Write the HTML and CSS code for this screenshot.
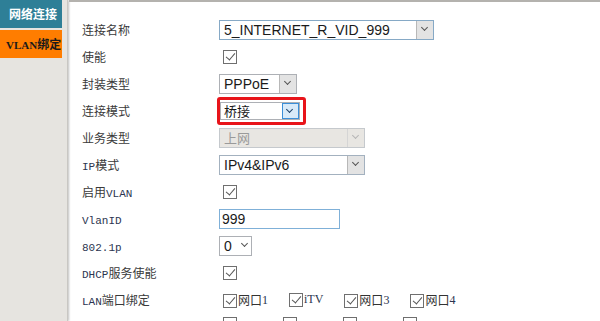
FILE: index.html
```html
<!DOCTYPE html>
<html lang="zh-CN">

<head>
    <meta charset="UTF-8">
    <title>VLAN绑定</title>
    <link rel="stylesheet" href="styles.css">
</head>

<body>
    <div id="page">
        <div id="sidebar">
            <div class="menu-item menu-top">网络连接</div>
            <div class="menu-item menu-active"><span class="mono">VLAN</span>绑定</div>
        </div>

        <div id="content">
            <div class="row">
                <div class="label">连接名称</div>
                <div class="select sel-name"><span>5_INTERNET_R_VID_999</span><i class="arrow"></i></div>
            </div>
            <div class="row">
                <div class="label">使能</div>
                <div class="check on"></div>
            </div>
            <div class="row">
                <div class="label">封装类型</div>
                <div class="select sel-pppoe"><span>PPPoE</span><i class="arrow"></i></div>
            </div>
            <div class="row">
                <div class="label">连接模式</div>
                <div class="highlight">
                    <div class="select sel-mode"><span class="cjk">桥接</span><i class="arrow focus"></i></div>
                </div>
            </div>
            <div class="row">
                <div class="label">业务类型</div>
                <div class="select sel-wide disabled"><span class="cjk">上网</span><i class="arrow"></i></div>
            </div>
            <div class="row">
                <div class="label"><span class="mono">IP</span>模式</div>
                <div class="select sel-wide"><span>IPv4&amp;IPv6</span><i class="arrow"></i></div>
            </div>
            <div class="row">
                <div class="label">启用<span class="mono">VLAN</span></div>
                <div class="check on"></div>
            </div>
            <div class="row">
                <div class="label"><span class="mono">VlanID</span></div>
                <div class="textbox">999</div>
            </div>
            <div class="row">
                <div class="label"><span class="mono">802.1p</span></div>
                <div class="select sel-small"><span>0</span><i class="chev"></i></div>
            </div>
            <div class="row">
                <div class="label"><span class="mono">DHCP</span>服务使能</div>
                <div class="check on"></div>
            </div>
            <div class="row">
                <div class="label"><span class="mono">LAN</span>端口绑定</div>
                <div class="ports">
                    <div class="port"><div class="check on"></div>网口<span class="mono">1</span></div>
                    <div class="port"><div class="check on"></div><span class="mono">iTV</span></div>
                    <div class="port"><div class="check on"></div>网口<span class="mono">3</span></div>
                    <div class="port"><div class="check on"></div>网口<span class="mono">4</span></div>
                </div>
            </div>
            <div class="row row-last">
                <div class="label"></div>
                <div class="ports ports-wifi">
                    <div class="port"><div class="check"></div></div>
                    <div class="port"><div class="check"></div></div>
                    <div class="port"><div class="check"></div></div>
                    <div class="port"><div class="check"></div></div>
                </div>
            </div>
        </div>
    </div>
</body>

</html>
```

FILE: styles.css
```css
* {
    padding: 0;
    margin: 0;
    box-sizing: border-box;
}

body {
    background-color: #ffffff;
    font-family: 'Noto Sans CJK SC', sans-serif;
    font-size: 12px;
    color: #333333;
    overflow: hidden;
}

#page {
    display: flex;
    height: 321px;
    overflow: hidden;
}

#sidebar {
    width: 68px;
    flex-shrink: 0;
    background-color: #e6e4e0;
    border-right: 1px solid #c9c7c3;
    box-shadow: 1px 0 2px rgba(0, 0, 0, 0.25);
    display: flex;
    flex-direction: column;
    gap: 2px;
}

.menu-item {
    width: 62px;
    height: 28px;
    line-height: 28px;
    font-weight: bold;
    font-size: 12px;
    padding-left: 7px;
    white-space: nowrap;
    overflow: hidden;
}

.menu-top {
    background-color: #2e7f97;
    color: #ffffff;
    padding-left: 9px;
}

.menu-active {
    background-color: #ff7d00;
    color: #1a1a1a;
    padding-left: 6px;
}

.menu-active .mono {
    font-family: 'Liberation Serif', serif;
    font-size: 11px;
    font-weight: bold;
}

#content {
    flex: 1;
    border-top: 2px solid #b4b2ae;
    margin-left: 1px;
    padding: 14px 0 0 13px;
}

.row {
    display: flex;
    align-items: center;
    height: 27px;
}

.label {
    width: 137px;
    flex-shrink: 0;
    color: #3a3a3a;
    white-space: nowrap;
}

.mono {
    font-family: 'Liberation Mono', monospace;
    font-size: 11px;
}

.label .mono {
    color: #2b3550;
}

.select {
    display: flex;
    align-items: center;
    justify-content: space-between;
    height: 20px;
    border: 1px solid #a9b8c6;
    background-color: #ffffff;
    font-family: 'Liberation Sans', sans-serif;
    font-size: 14px;
    color: #1a1a1a;
    padding-left: 4px;
}

.select .cjk {
    font-family: 'Noto Sans CJK SC', sans-serif;
    font-size: 13px;
}

.sel-name {
    width: 215px;
    border-color: #86a9c6;
}

.sel-pppoe {
    width: 78px;
    border-color: #adb0b5;
}

.sel-mode {
    width: 80px;
    height: 18px;
    border-color: #adb0b5;
    padding-left: 3px;
}

.sel-wide {
    width: 146px;
    border-color: #a3b1bf;
}

.sel-small {
    width: 33px;
    border-color: #adb0b5;
}

.disabled {
    background-color: #e8e6e2;
    border-color: #c5c9cd;
    color: #9a9a9a;
}

.arrow {
    width: 17px;
    height: 18px;
    background-color: #e3e3e3;
    border-left: 1px solid #b8b8b8;
    position: relative;
}

.sel-mode .arrow {
    height: 16px;
}

.arrow::after,
.chev::after {
    content: '';
    position: absolute;
    left: 5px;
    top: 4px;
    width: 4px;
    height: 4px;
    border-right: 1px solid #555555;
    border-bottom: 1px solid #555555;
    transform: rotate(45deg);
}

.disabled .arrow {
    background-color: #e8e6e2;
    border-left-color: #d5d5d5;
}

.disabled .arrow::after {
    border-color: #b5b5b5;
}

.arrow.focus {
    background-color: #d8eaf9;
    border: 1px solid #3b8fd9;
}

.arrow.focus::after {
    left: 4px;
    top: 3px;
    border-color: #1c3f66;
}

.chev {
    width: 14px;
    height: 18px;
    position: relative;
}

.highlight {
    margin-left: -2px;
    border: 3px solid #e8141a;
    border-radius: 3px;
    padding: 2px 3px 2px 0;
}

.textbox {
    width: 121px;
    height: 20px;
    border: 1px solid #7fb0d8;
    font-family: 'Liberation Sans', sans-serif;
    font-size: 14px;
    color: #1a1a1a;
    line-height: 18px;
    padding-left: 2px;
}

.check {
    width: 14px;
    height: 14px;
    border: 1px solid #6f6f6f;
    background-color: #ffffff;
    margin-left: 4px;
    position: relative;
    flex-shrink: 0;
}

.check.on::after {
    content: '';
    position: absolute;
    left: 4px;
    top: 0px;
    width: 4px;
    height: 8px;
    border-right: 1.5px solid #555555;
    border-bottom: 1.5px solid #555555;
    transform: rotate(40deg);
}

.ports {
    display: flex;
    align-items: center;
    gap: 17px;
}

.port {
    display: flex;
    align-items: flex-end;
    white-space: nowrap;
}

.port .check {
    margin-right: 1px;
}

.port .mono {
    font-family: 'Liberation Serif', serif;
    font-size: 12px;
    color: #2b3550;
}

.ports-wifi {
    gap: 0;
}

.ports-wifi .port {
    width: 60px;
}

.row-last {
    align-items: flex-start;
    padding-top: 4px;
}
```
